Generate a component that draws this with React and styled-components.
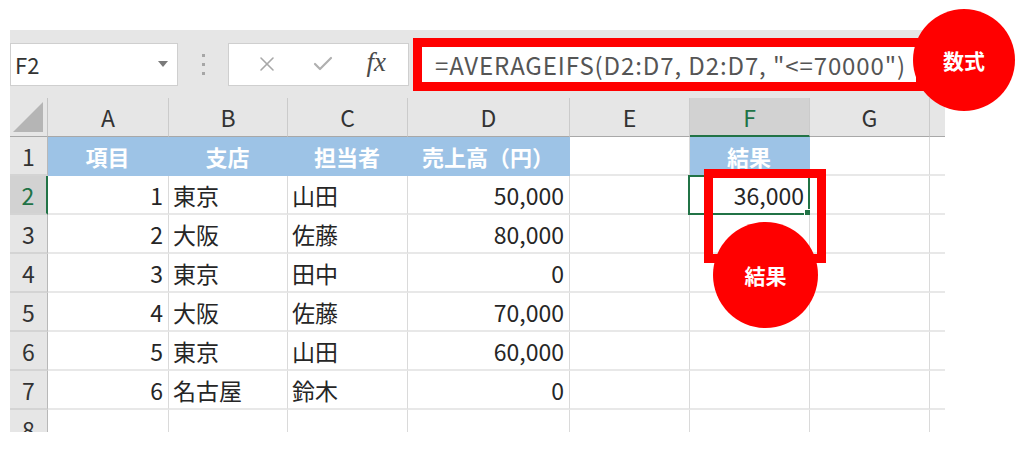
import React from "react";
import styled, { createGlobalStyle, css } from "styled-components";
import { X, Check } from "lucide-react";

const GlobalStyle = createGlobalStyle`
  body {
    margin: 0;
    background: #ffffff;
    font-family: "Noto Sans CJK JP", "Noto Sans", sans-serif;
    color: #262626;
  }
  * { box-sizing: border-box; }
`;

const columns = ["A", "B", "C", "D", "E", "F", "G"];

const rows = [
  ["1", "東京", "山田", "50,000"],
  ["2", "大阪", "佐藤", "80,000"],
  ["3", "東京", "田中", "0"],
  ["4", "大阪", "佐藤", "70,000"],
  ["5", "東京", "山田", "60,000"],
  ["6", "名古屋", "鈴木", "0"],
];

const App = () => {
  return (
    <Page>
      <GlobalStyle />
      <Sheet>
        <Toolbar>
          <NameBox>
            <span>F2</span>
            <Caret />
          </NameBox>
          <Dots>
            <i /><i /><i />
          </Dots>
          <FormulaButtons>
            <X size={24} strokeWidth={1.6} color="#a8a8a8" />
            <Check size={24} strokeWidth={2.2} color="#b0b0b0" />
            <Fx>fx</Fx>
          </FormulaButtons>
          <FormulaInput>=AVERAGEIFS(D2:D7, D2:D7, "&lt;=70000")</FormulaInput>
        </Toolbar>

        <Grid>
          <Corner />
          {columns.map(c => (
            <ColHead key={c} active={c === "F"}>{c}</ColHead>
          ))}
          <ColHead last />

          <RowHead>1</RowHead>
          <Cell blue center bold>項目</Cell>
          <Cell blue center bold>支店</Cell>
          <Cell blue center bold>担当者</Cell>
          <Cell blue center bold>売上高（円）</Cell>
          <Cell />
          <Cell blue center bold>結果</Cell>
          <Cell />
          <Cell last />

          {rows.map((r, i) => (
            <React.Fragment key={i}>
              <RowHead active={i === 0}>{i + 2}</RowHead>
              <Cell right>{r[0]}</Cell>
              <Cell>{r[1]}</Cell>
              <Cell>{r[2]}</Cell>
              <Cell right>{r[3]}</Cell>
              <Cell />
              {i === 0 ? <Cell right selected>36,000</Cell> : <Cell />}
              <Cell />
              <Cell last />
            </React.Fragment>
          ))}

          <RowHead>8</RowHead>
          {columns.map(c => <Cell key={c} />)}
          <Cell last />
        </Grid>
      </Sheet>

      <ResultFrame />
      <Badge style={{ left: 913, top: 9, width: 102, height: 102 }}>数式</Badge>
      <Badge style={{ left: 713, top: 222, width: 105, height: 106 }}>結果</Badge>
    </Page>
  );
};
export default App;

const Page = styled.div`
  position: relative;
  width: 1024px;
  height: 449px;
  padding: 30px 0 0 10px;
  overflow: hidden;
`;

const Sheet = styled.div`
  width: 935px;
`;

const Toolbar = styled.div`
  display: flex;
  align-items: center;
  height: 68px;
  background: #e6e6e6;
`;

const NameBox = styled.div`
  width: 168px;
  height: 43px;
  background: #fff;
  border: 1px solid #cfcfcf;
  display: flex;
  align-items: center;
  justify-content: space-between;
  padding: 0 9px 0 4px;
  font-size: 22px;
  color: #333;
`;

const Caret = styled.span`
  width: 0;
  height: 0;
  border-left: 5px solid transparent;
  border-right: 5px solid transparent;
  border-top: 6px solid #7a7a7a;
`;

const Dots = styled.div`
  width: 50px;
  display: flex;
  flex-direction: column;
  align-items: center;
  gap: 6px;

  i {
    width: 3px;
    height: 3px;
    background: #a6a6a6;
  }
`;

const FormulaButtons = styled.div`
  width: 181px;
  height: 43px;
  background: #fff;
  border: 1px solid #cfcfcf;
  display: flex;
  align-items: center;
  justify-content: space-around;
  padding: 0 6px 0 10px;
`;

const Fx = styled.span`
  font-family: "Liberation Serif", serif;
  font-style: italic;
  font-size: 27px;
  color: #4a4a4a;
  margin-top: -3px;
`;

const FormulaInput = styled.div`
  margin-left: 4px;
  width: 512px;
  height: 53px;
  border: 9px solid #ff0000;
  background: #fff;
  display: flex;
  align-items: center;
  padding-left: 13px;
  font-size: 24px;
  letter-spacing: 0.9px;
  color: #555;
  white-space: nowrap;
  overflow: hidden;
`;

const Grid = styled.div`
  display: grid;
  grid-template-columns: 38px 121px 119px 120px 162px 120px 120px 120px 15px;
  grid-auto-rows: 39px;
  height: 334px;
  overflow: hidden;
`;

const Corner = styled.div`
  background: #e6e6e6;
  border-right: 1px solid #c4c4c4;
  border-bottom: 1px solid #a8a8a8;
  position: relative;

  &::after {
    content: "";
    position: absolute;
    right: 4px;
    bottom: 4px;
    width: 0;
    height: 0;
    border-left: 30px solid transparent;
    border-bottom: 30px solid #b5b5b5;
  }
`;

const ColHead = styled.div`
  background: ${({ active }) => (active ? "#d2d2d2" : "#e6e6e6")};
  color: ${({ active }) => (active ? "#217346" : "#333")};
  border-right: ${({ last }) => (last ? "none" : "1px solid #cbcbcb")};
  border-bottom: ${({ active }) => (active ? "2px solid #217346" : "1px solid #a8a8a8")};
  display: flex;
  align-items: center;
  justify-content: center;
  font-size: 23px;
`;

const RowHead = styled.div`
  background: ${({ active }) => (active ? "#d2d2d2" : "#e6e6e6")};
  color: ${({ active }) => (active ? "#217346" : "#333")};
  border-right: ${({ active }) => (active ? "2px solid #217346" : "1px solid #b8b8b8")};
  border-bottom: 2px solid #d4d4d4;
  display: flex;
  align-items: center;
  justify-content: center;
  font-size: 23px;
`;

const Cell = styled.div`
  position: relative;
  display: flex;
  align-items: center;
  justify-content: ${({ right, center }) => (right ? "flex-end" : center ? "center" : "flex-start")};
  padding: 0 5px 0 4px;
  font-size: 23px;
  font-weight: ${({ bold }) => (bold ? 700 : 400)};
  white-space: nowrap;
  background: #fff;
  border-right: ${({ last }) => (last ? "none" : "1px solid #dadada")};
  border-bottom: 2px solid #e8e8e8;

  ${({ blue }) =>
    blue &&
    css`
      background: #9dc3e6;
      color: #fff;
      font-size: 22px;
      border-right-color: #9dc3e6;
      border-bottom-color: #9dc3e6;
    `}

  ${({ selected }) =>
    selected &&
    css`
      &::before {
        content: "";
        position: absolute;
        left: -2px;
        top: -1px;
        right: -1px;
        bottom: -2px;
        border: 2px solid #217346;
      }
      &::after {
        content: "";
        position: absolute;
        right: -4px;
        bottom: -5px;
        width: 7px;
        height: 7px;
        background: #217346;
        border: 1px solid #fff;
      }
    `}
`;

const ResultFrame = styled.div`
  position: absolute;
  left: 704px;
  top: 169px;
  width: 122px;
  height: 94px;
  border: 9px solid #ff0000;
`;

const Badge = styled.div`
  position: absolute;
  border-radius: 50%;
  background: #ff0000;
  color: #fff;
  font-weight: 700;
  font-size: 21px;
  display: flex;
  align-items: center;
  justify-content: center;
`;
